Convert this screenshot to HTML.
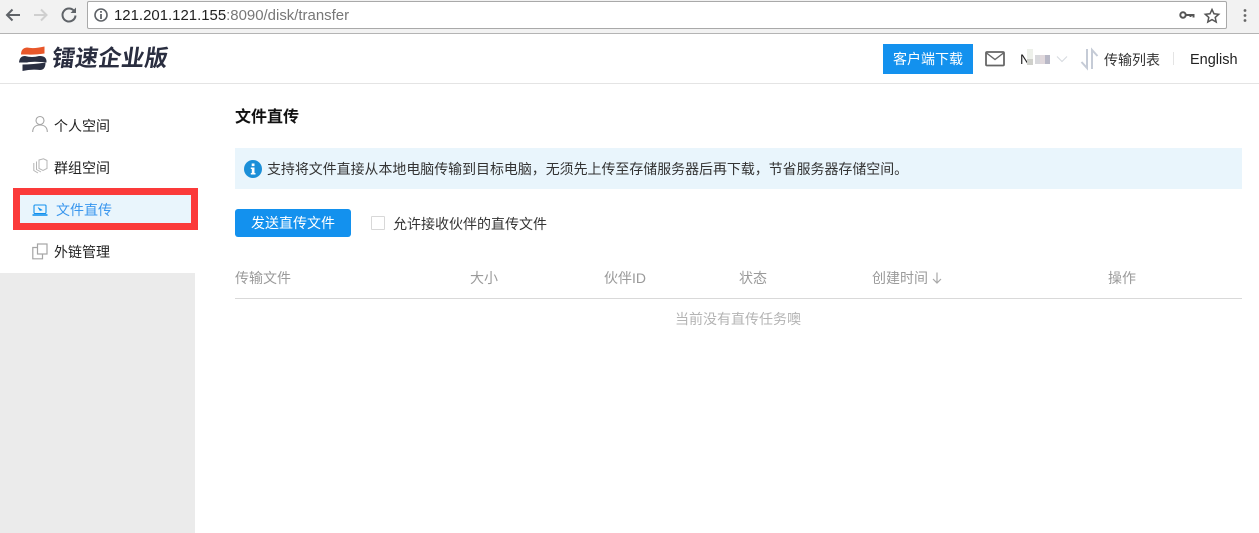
<!DOCTYPE html>
<html lang="zh">
<head>
<meta charset="utf-8">
<style>
html,body{margin:0;padding:0;width:1259px;height:533px;overflow:hidden;background:#fff;font-family:"Liberation Sans","Noto Sans CJK SC",sans-serif;}
.a{position:absolute;white-space:nowrap;}
svg{position:absolute;overflow:visible;}
.th{top:269px;font-size:14px;line-height:18px;color:#9a9a9a;}
.nav{left:54px;font-size:14px;line-height:18px;color:#222;}
</style>
</head>
<body>
<!-- browser bar -->
<div class="a" style="left:0;top:0;width:1259px;height:33px;background:#f2f2f2;border-bottom:1px solid #b4b4b4;"></div>
<div class="a" style="left:87px;top:1px;width:1138px;height:26px;background:#fff;border:1px solid #a9a9a9;border-radius:2px;"></div>
<svg style="left:0;top:0" width="90" height="33" fill="none">
<path d="M20 15H7.500M12.500 9.500L7 15L12.500 20.500" stroke="#5f6368" stroke-width="2"/>
<path d="M34 15H46.500M41 9.500L46.500 15L41 20.500" stroke="#cfcfcf" stroke-width="2"/>
<path d="M74.500 11.500A6.500 6.500 0 1 0 75.500 15.500" stroke="#5f6368" stroke-width="2"/>
<path d="M76 7.500V13H70.500Z" fill="#5f6368"/>
</svg>
<svg style="left:94px;top:8px" width="14" height="14" fill="none">
<circle cx="7" cy="7" r="6" stroke="#5f6368" stroke-width="1.600"/>
<path d="M7 6V11M7 3V4.800" stroke="#5f6368" stroke-width="1.800"/>
</svg>
<div class="a" style="left:114px;top:7px;font-size:14.950px;line-height:18px;color:#222;">121.201.121.155<span style="color:#777">:8090/disk/transfer</span></div>
<svg style="left:1178px;top:8px" width="50" height="16" fill="none">
<circle cx="5" cy="7" r="2.700" stroke="#555" stroke-width="2"/>
<path d="M8 7H15.500V9.500M12.500 7V9" stroke="#555" stroke-width="2"/>
<path d="M34 1.500L36 5.800L40.700 6.300L37.200 9.400L38.200 14L34 11.600L29.800 14L30.800 9.400L27.300 6.300L32 5.800Z" stroke="#555" stroke-width="1.500"/>
</svg>
<svg style="left:1242px;top:8px" width="6" height="16"><circle cx="3" cy="2.500" r="1.400" fill="#666"/><circle cx="3" cy="7.500" r="1.400" fill="#666"/><circle cx="3" cy="12.500" r="1.400" fill="#666"/></svg>

<!-- header -->
<div class="a" style="left:0;top:83px;width:1259px;height:1px;background:#e4e4e4;"></div>
<svg style="left:19px;top:46px" width="27" height="25">
<path d="M2 8.500Q2 2 8 1.500Q15 3 25.500 .5V7.500Q15 9 9 8.500Z" fill="#e8572a"/>
<path d="M0 16.500Q.5 10 6 10Q13 12 20 10Q27 9.500 27.500 15V16.500Q14 15 8 16.500Z" fill="#2a2f42"/>
<path d="M3.500 18.500Q14 18.500 26.500 16.500Q26.500 24 21 24Q12 23 3.500 25Z" fill="#2a2f42"/>
</svg>
<div class="a" style="left:52px;top:45px;font-size:23px;line-height:27px;font-weight:700;color:#2a2e40;letter-spacing:0.200px;transform:skewX(-8deg);">镭速企业版</div>
<div class="a" style="left:883px;top:44px;width:90px;height:30px;line-height:31px;background:#1391ee;color:#fff;font-size:14px;text-align:center;">客户端下载</div>
<svg style="left:985px;top:51px" width="20" height="16" fill="none">
<rect x="1" y="1" width="18" height="13.500" rx="1" stroke="#666" stroke-width="1.800"/>
<path d="M1.500 2L10 8.500L18.500 2" stroke="#666" stroke-width="1.400"/>
</svg>
<div class="a" style="left:1020px;top:50px;font-size:14px;line-height:18px;color:#222;">N</div>
<div class="a" style="left:1027px;top:49px;width:6px;height:10px;background:#edf0ea;"></div>
<div class="a" style="left:1027px;top:59px;width:6px;height:6px;background:#cfd0cb;"></div>
<div class="a" style="left:1035px;top:55px;width:5px;height:9px;background:#d8d8dc;"></div>
<div class="a" style="left:1040px;top:55px;width:5px;height:9px;background:#e0d8dc;"></div>
<div class="a" style="left:1045px;top:55px;width:5px;height:9px;background:#b8b8c6;"></div>
<svg style="left:1056px;top:55px" width="12" height="8" fill="none"><path d="M1 1.500L6 6.500L11 1.500" stroke="#d5d9de" stroke-width="1"/></svg>
<svg style="left:1080px;top:48px" width="19" height="22" fill="none">
<path d="M7 1V20L1.500 14" stroke="#c5cbd6" stroke-width="2"/>
<path d="M12 21V2L17.500 8" stroke="#c5cbd6" stroke-width="2"/>
</svg>
<div class="a" style="left:1104px;top:51px;font-size:14px;line-height:18px;color:#333;">传输列表</div>
<div class="a" style="left:1173px;top:52px;width:1px;height:13px;background:#e4e4e4;"></div>
<div class="a" style="left:1190px;top:51px;font-size:14.500px;line-height:18px;color:#222;">English</div>

<!-- sidebar -->
<div class="a" style="left:0;top:273px;width:195px;height:260px;background:#ebebeb;"></div>
<svg style="left:32px;top:115px" width="16" height="18" fill="none">
<circle cx="8" cy="5.500" r="4" stroke="#a5a5a5" stroke-width="1.100"/>
<path d="M0.700 17C0.700 12 4 10 8 10S15.300 12 15.300 17" stroke="#a5a5a5" stroke-width="1.100"/>
</svg>
<div class="a nav" style="top:117px;">个人空间</div>
<svg style="left:33px;top:158px" width="15" height="16" fill="none" stroke="#b5b5b5" stroke-width="1">
<path d="M6 2L10.500 .8L14 2.500V10.500L10 12.500L6 10.500Z"/>
<path d="M3.500 3.500V11.500L8 14"/>
<path d="M.8 5V12.500L5 15"/>
</svg>
<div class="a nav" style="top:159px;">群组空间</div>

<div class="a" style="left:13px;top:188px;width:171px;height:28px;border:7px solid #fb3a3a;background:#e9f5fc;"></div>
<svg style="left:32px;top:204px" width="16" height="13" fill="none">
<rect x="2" y="1" width="12" height="8.500" rx="1" stroke="#1391ee" stroke-width="1.100"/>
<path d="M0.500 11H15.500" stroke="#1391ee" stroke-width="1.600"/>
<path d="M6 3.500L10 6L8 6.500Z" fill="#1391ee" stroke="#1391ee" stroke-width=".6"/>
</svg>
<div class="a" style="left:56px;top:201px;font-size:14px;line-height:18px;color:#3a97ee;">文件直传</div>

<svg style="left:32px;top:243px" width="16" height="17" fill="none" stroke="#a5a5a5" stroke-width="1.200">
<path d="M5.500 4.500H.8V15.800H10.500V11"/>
<rect x="5.500" y="1" width="9.500" height="10"/>
</svg>
<div class="a nav" style="top:243px;">外链管理</div>

<!-- content -->
<div class="a" style="left:235px;top:108px;font-size:16px;line-height:20px;font-weight:700;color:#111;">文件直传</div>
<div class="a" style="left:235px;top:148px;width:1007px;height:41px;background:#e9f5fc;"></div>
<svg style="left:244px;top:160px" width="18" height="18">
<circle cx="9" cy="9" r="9" fill="#1b8fd8"/>
<rect x="7.700" y="3.500" width="2.800" height="2.600" fill="#fff"/>
<path d="M6.800 7.500H10.500V13H11.500V14.500H6.800V13H7.800V9H6.800Z" fill="#fff"/>
</svg>
<div class="a" style="left:267px;top:160px;font-size:13.950px;line-height:18px;color:#333;">支持将文件直接从本地电脑传输到目标电脑，无须先上传至存储服务器后再下载，节省服务器存储空间。</div>
<div class="a" style="left:235px;top:209px;width:116px;height:28px;line-height:28px;background:#1391ee;color:#fff;font-size:14px;text-align:center;border-radius:3px;">发送直传文件</div>
<div class="a" style="left:371px;top:216px;width:12px;height:12px;border:1px solid #d8d8d8;border-radius:1px;background:#fff;"></div>
<div class="a" style="left:393px;top:215px;font-size:14px;line-height:18px;color:#333;">允许接收伙伴的直传文件</div>

<div class="a th" style="left:235px;">传输文件</div>
<div class="a th" style="left:470px;">大小</div>
<div class="a th" style="left:604px;">伙伴ID</div>
<div class="a th" style="left:739px;">状态</div>
<div class="a th" style="left:872px;">创建时间</div>
<svg style="left:932px;top:272px" width="10" height="12" fill="none"><path d="M5 0.500V11M1 7L5 11L9 7" stroke="#a8a8a8" stroke-width="1.200"/></svg>
<div class="a th" style="left:1108px;">操作</div>
<div class="a" style="left:235px;top:298px;width:1007px;height:1px;background:#d9d9d9;"></div>
<div class="a" style="left:675px;top:310px;font-size:14px;line-height:18px;color:#b4b4b4;">当前没有直传任务噢</div>
</body>
</html>
